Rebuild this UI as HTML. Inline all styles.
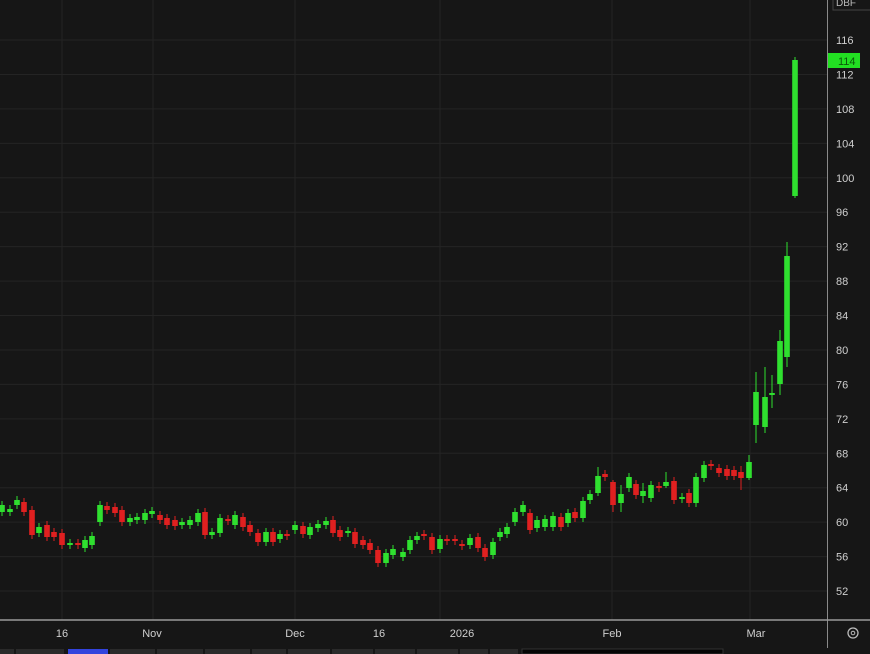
<!DOCTYPE html>
<html><head><meta charset="utf-8"><style>
html,body{margin:0;padding:0;background:#161616;width:870px;height:654px;overflow:hidden;font-family:"Liberation Sans",sans-serif}
svg{display:block}
</style></head><body>
<svg id="s" width="870" height="654" xmlns="http://www.w3.org/2000/svg">
<rect width="870" height="654" fill="#161616"/>
<g id="grid" stroke="#242424" stroke-width="1"></g>
<g id="c"></g>
<line x1="827.5" y1="0" x2="827.5" y2="648" stroke="#8a8a8a" stroke-width="1"/>
<line x1="0" y1="620" x2="870" y2="620" stroke="#9a9a9a" stroke-width="1.5"/>
<rect x="833" y="-4" width="40" height="14" fill="none" stroke="#444"/>
<text x="836" y="6" fill="#bbb" font-size="10">DBF</text>
<g id="yl" fill="#cfcfcf" font-size="11"></g>
<rect x="828" y="53" width="32" height="15" fill="#22e022"/>
<text x="838" y="65" fill="#0a5a0a" font-size="11">114</text>
<g fill="#cfcfcf" font-size="11" text-anchor="middle">
<text x="62" y="637">16</text><text x="152" y="637">Nov</text><text x="295" y="637">Dec</text>
<text x="379" y="637">16</text><text x="462" y="637">2026</text><text x="612" y="637">Feb</text><text x="756" y="637">Mar</text>
</g>
<circle cx="853" cy="633" r="5" fill="none" stroke="#bbb" stroke-width="1.3"/>
<circle cx="853" cy="633" r="1.8" fill="none" stroke="#bbb" stroke-width="1"/>
<g id="tabs"></g>
</svg>
<script>
var NS="http://www.w3.org/2000/svg";
function el(p,t,a){var e=document.createElementNS(NS,t);for(var k in a)e.setAttribute(k,a[k]);p.appendChild(e);return e;}
var g=document.getElementById('grid'),yl=document.getElementById('yl');
for(var p=116;p>=52;p-=4){var y=40+(116-p)*8.61;el(g,'line',{x1:0,x2:827,y1:y,y2:y});var t=el(yl,'text',{x:836,y:y+4});t.textContent=p;}
[62,153,295,440,612,750].forEach(function(x){el(g,'line',{x1:x,x2:x,y1:0,y2:620});});
var d=[[2,505,512,'g'],[10,509,512,'g'],[17,500,505,'g'],[24,502,512,'r'],[32,510,535,'r'],[39,527,533,'g'],[47,525,537,'r'],[54,532,537,'r'],[62,533,545,'r'],[70,543,545,'g'],[78,543,545,'r'],[85,540,548,'g'],[92,536,545,'g'],[100,505,522,'g'],[107,506,510,'r'],[115,507,513,'r'],[122,510,522,'r'],[130,518,522,'g'],[137,517,520,'g'],[145,513,520,'g'],[152,511,514,'g'],[160,515,520,'r'],[167,518,525,'r'],[175,520,526,'r'],[182,522,525,'g'],[190,520,525,'g'],[198,513,522,'g'],[205,512,535,'r'],[212,532,535,'g'],[220,518,533,'g'],[228,519,521,'r'],[235,515,525,'g'],[243,517,527,'r'],[250,525,532,'r'],[258,533,542,'r'],[266,532,542,'g'],[273,532,542,'r'],[280,534,539,'g'],[287,534,536,'r'],[295,525,530,'g'],[303,526,534,'r'],[310,527,535,'g'],[318,524,528,'g'],[326,521,525,'g'],[333,520,533,'r'],[340,530,537,'r'],[348,531,533,'g'],[355,532,544,'r'],[363,540,545,'r'],[370,543,550,'r'],[378,550,563,'r'],[386,553,563,'g'],[393,549,555,'g'],
[403,552,557,'g'],[410,540,550,'g'],[417,536,540,'g'],[424,534,536,'r'],[432,537,550,'r'],[440,539,549,'g'],[447,539,541,'r'],[455,539,541,'r'],[462,544,546,'r'],[470,538,545,'g'],[478,537,548,'r'],[485,548,557,'r'],[493,542,555,'g'],[500,532,537,'g'],[507,527,534,'g'],[515,512,522,'g'],[523,505,512,'g'],[530,513,530,'r'],[537,520,528,'g'],[545,519,527,'g'],[553,516,527,'g'],[561,517,527,'r'],[568,513,523,'g'],[575,512,518,'r'],[583,501,518,'g'],[590,494,500,'g'],[598,476,493,'g',467,496],[605,474,477,'r'],[613,482,505,'r',480,512],[621,494,503,'g',485,512],[629,477,488,'g'],[636,484,495,'r'],[643,491,496,'g',483,503],[651,485,498,'g'],[659,486,488,'r'],[666,482,486,'g',472,488],[674,481,500,'r'],[682,497,499,'g'],[689,493,503,'r'],[696,477,503,'g'],[704,465,478,'g'],[711,464,466,'r'],[719,468,473,'r'],[727,469,476,'r'],[734,470,476,'r'],[741,472,478,'r',466,490],[749,462,478,'g',455,480],
[756,392,425,'g',372,443],[765,397,427,'g',367,433],[772,393,395,'g',375,408],[780,341,384,'g',330,395],[787,256,357,'g',242,367],[795,60,196,'g',57,198]];
var c=document.getElementById('c');
d.forEach(function(a){var col=a[3]=='g'?'#2fe02f':'#e02020';var wt=a[4]||a[1]-4,wb=a[5]||a[2]+4;
el(c,'line',{x1:a[0],x2:a[0],y1:wt,y2:wb,stroke:col,'stroke-width':1});
el(c,'rect',{x:a[0]-2.8,y:a[1],width:5.6,height:Math.max(2,a[2]-a[1]),fill:col});});
var tb=document.getElementById('tabs');
[[0,14],[16,64],[68,108,'#3344dd'],[110,155],[157,203],[205,250],[252,286],[288,330],[332,373],[375,415],[417,458],[460,488],[490,518]].forEach(function(a){el(tb,'rect',{x:a[0],y:649,width:a[1]-a[0],height:5,fill:a[2]||'#2a2a2a'});});
el(tb,'rect',{x:522,y:649,width:201,height:5,fill:'#050505',stroke:'#333'});
</script>
</body></html>
